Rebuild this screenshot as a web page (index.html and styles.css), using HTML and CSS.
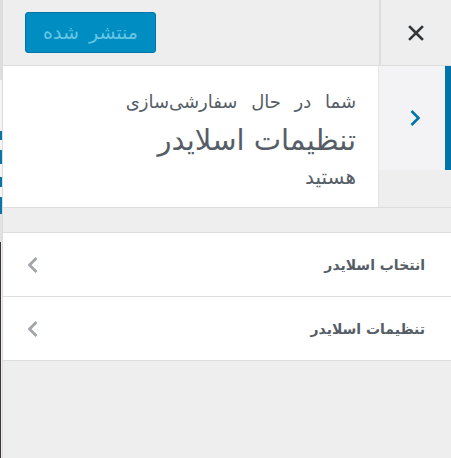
FILE: index.html
```html
<!DOCTYPE html>
<html lang="fa">
<head>
<meta charset="utf-8">
<link rel="stylesheet" href="styles.css">
</head>
<body>
<div class="frame">
  <div class="edge">
    <div class="seg seg-light"></div>
    <div class="seg seg-pale"></div>
    <div class="seg seg-blue s1"></div>
    <div class="seg seg-pale s2"></div>
    <div class="seg seg-blue s3"></div>
    <div class="seg seg-pale s4"></div>
    <div class="seg seg-blue s5"></div>
    <div class="seg seg-pale s6"></div>
    <div class="seg seg-blue s7"></div>
    <div class="seg seg-grey"></div>
    <div class="seg seg-dark"></div>
  </div>
  <div class="panel" dir="rtl">
    <header class="topbar">
      <button class="close" aria-label="بستن">
        <svg width="16" height="16" viewBox="0 0 16 16"><path d="M2 2 L14 14 M14 2 L2 14" stroke="#32373c" stroke-width="2.6" stroke-linecap="square"/></svg>
      </button>
      <div class="topbar-fill">
        <button class="publish" disabled>منتشر شده</button>
      </div>
    </header>
    <section class="info">
      <div class="back-col">
        <button class="back" aria-label="بازگشت">
          <svg width="12" height="18" viewBox="0 0 12 18"><path d="M2.5 2 L9.5 9 L2.5 16" fill="none" stroke="#0073aa" stroke-width="2.6"/></svg>
        </button>
      </div>
      <div class="info-text">
        <div class="line-small line-first">شما در حال سفارشی‌سازی</div>
        <div class="line-title">تنظیمات اسلایدر</div>
        <div class="line-small line-last">هستید</div>
      </div>
    </section>
    <div class="gap"></div>
    <ul class="sections">
      <li class="item">
        <span class="item-title">انتخاب اسلایدر</span>
        <svg class="chev" width="12" height="18" viewBox="0 0 12 18"><path d="M9.5 2 L2.5 9 L9.5 16" fill="none" stroke="#a0a5aa" stroke-width="2.8"/></svg>
      </li>
      <li class="item">
        <span class="item-title">تنظیمات اسلایدر</span>
        <svg class="chev" width="12" height="18" viewBox="0 0 12 18"><path d="M9.5 2 L2.5 9 L9.5 16" fill="none" stroke="#a0a5aa" stroke-width="2.8"/></svg>
      </li>
    </ul>
  </div>
</div>
</body>
</html>
```
FILE: styles.css
```css
html, body {
  margin: 0;
  padding: 0;
  background: #eeeeee;
}
body {
  font-family: "DejaVu Sans", sans-serif;
  color: #555d66;
}
.frame {
  display: flex;
  width: 451px;
  height: 458px;
  overflow: hidden;
}
.edge {
  width: 2px;
  display: flex;
  flex-direction: column;
  border-right: 1px solid #dcdcdc;
  flex-shrink: 0;
}
.seg { width: 2px; }
.seg-light { height: 80px; background: #dedede; }
.seg-pale { height: 51px; background: #f4f4f4; }
.seg-blue { background: #0a73aa; }
.s1 { height: 9px; }
.s2 { height: 10px; }
.s3 { height: 14px; }
.s4 { height: 13px; }
.s5 { height: 10px; }
.s6 { height: 10px; }
.s7 { height: 17px; }
.seg-grey { height: 28px; background: #e2e2e2; }
.seg-dark { flex: 1; width: 1px; background: #3d3536; }

.panel {
  flex: 1;
  display: flex;
  flex-direction: column;
}
.topbar {
  display: flex;
  height: 65px;
  border-bottom: 1px solid #dddddd;
  background: #eeeeee;
}
.close {
  width: 72px;
  height: 65px;
  padding: 0;
  border: 0;
  border-left: 2px solid #dddddd;
  background: #eeeeee;
  display: flex;
  align-items: center;
  justify-content: center;
}
.topbar-fill {
  flex: 1;
  display: flex;
  justify-content: flex-end;
  align-items: flex-start;
  padding-left: 22px;
}
.publish {
  margin-top: 12px;
  width: 131px;
  height: 41px;
  border: 1px solid #0073aa;
  border-radius: 3px;
  background: #008ec2;
  color: #66c6e4;
  font-family: "DejaVu Sans", sans-serif;
  font-size: 19px;
  word-spacing: 4px;
  padding: 0 0 2px;
}

.info {
  display: flex;
  height: 141px;
  border-bottom: 1px solid #dddddd;
}
.back-col {
  width: 72px;
  background: #eeeeee;
}
.back {
  width: 72px;
  height: 104px;
  border: 0;
  border-right: 6px solid #0073aa;
  background: #f3f3f5;
  display: flex;
  align-items: center;
  justify-content: center;
  padding: 0 0 0 6px;
}
.info-text {
  flex: 1;
  background: #ffffff;
  padding: 23px 22px 0 0;
  display: flex;
  flex-direction: column;
  border-right: 1px solid #e4e4e4;
}
.line-small {
  font-size: 18px;
  line-height: 26px;
  color: #555d66;
}
.line-first {
  word-spacing: 8px;
}
.line-last {
  font-size: 20px;
}
.line-title {
  font-size: 29px;
  line-height: 40px;
  margin: 5px 0 4px;
  color: #555d66;
}
.gap {
  height: 24px;
  border-bottom: 1px solid #dddddd;
}
.sections {
  list-style: none;
  margin: 0;
  padding: 0;
}
.item {
  display: flex;
  align-items: center;
  justify-content: space-between;
  height: 63px;
  background: #ffffff;
  border-bottom: 1px solid #dddddd;
  padding: 0 26px 0 24px;
}
.item-title {
  font-size: 14px;
  font-weight: bold;
  color: #555d66;
}
.chev { display: block; }
```
